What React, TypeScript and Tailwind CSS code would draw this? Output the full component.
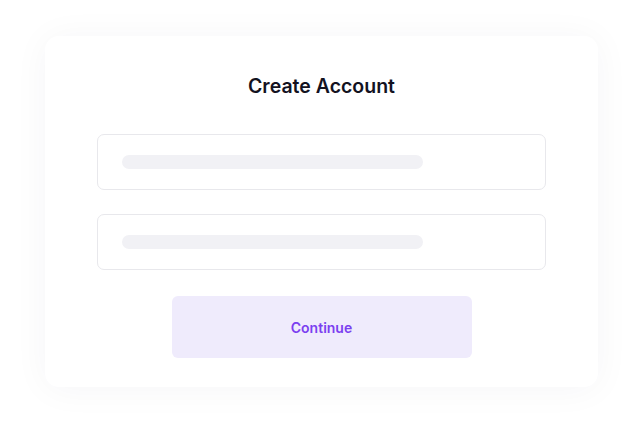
import React from "react";

export default function App() {
  return (
    <div
      className="w-[634px] h-[432px] bg-white pl-[45px] pt-[36px]"
      style={{ fontFamily: "Inter, 'Noto Sans', sans-serif" }}
    >
      <div className="w-[553px] h-[351px] bg-white rounded-[14px] shadow-[0_2px_36px_rgba(20,20,60,0.045)] px-[52px] pt-[36px] flex flex-col items-center">
        <h1 className="h-[28px] leading-[28px] text-[19.5px] font-semibold text-[#13121f] tracking-[0px]">
          Create Account
        </h1>
        <div className="mt-[34px] w-full h-[56px] border border-[#e8e8ec] rounded-[7px] flex items-center pl-[24px]">
          <div className="w-[301px] h-[14px] rounded-full bg-[#f1f1f5]" />
        </div>
        <div className="mt-[24px] w-full h-[56px] border border-[#e8e8ec] rounded-[7px] flex items-center pl-[24px]">
          <div className="w-[301px] h-[14px] rounded-full bg-[#f1f1f5]" />
        </div>
        <button className="mt-[26px] w-[300px] h-[62px] rounded-[6px] bg-[#efebfc] text-[#7b3ff0] text-[14px] font-semibold">
          Continue
        </button>
      </div>
    </div>
  );
}
